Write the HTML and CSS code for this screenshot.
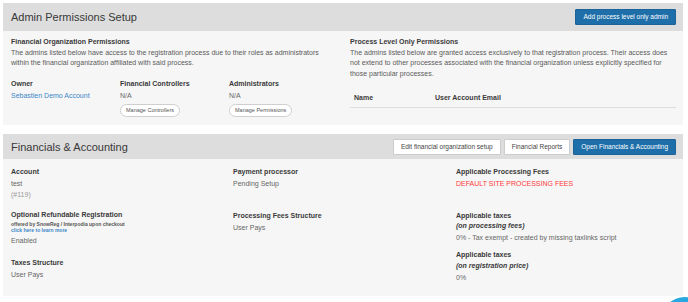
FILE: index.html
```html
<!DOCTYPE html>
<html lang="en">
<head>
<meta charset="utf-8">
<title>Admin Permissions Setup</title>
<link rel="stylesheet" href="styles.css">
</head>
<body>
<section class="panel panel-admin">
  <header class="panel-head head-tall">
    <h2 class="panel-title">Admin Permissions Setup</h2>
    <button class="btn btn-primary">Add process level only admin</button>
  </header>
  <div class="panel-body two-col">
    <div class="col">
      <h3 class="label">Financial Organization Permissions</h3>
      <p class="text">The admins listed below have access to the registration process due to their roles as administrators within the financial organization affiliated with said process.</p>
      <div class="roles">
        <div class="role">
          <div class="label">Owner</div>
          <a class="value link" href="#">Sebastien Demo Account</a>
        </div>
        <div class="role">
          <div class="label">Financial Controllers</div>
          <div class="value">N/A</div>
          <button class="pill">Manage Controllers</button>
        </div>
        <div class="role">
          <div class="label">Administrators</div>
          <div class="value">N/A</div>
          <button class="pill">Manage Permissions</button>
        </div>
      </div>
    </div>
    <div class="col">
      <h3 class="label">Process Level Only Permissions</h3>
      <p class="text">The admins listed below are granted access exclusively to that registration process. Their access does not extend to other processes associated with the financial organization unless explicitly specified for those particular processes.</p>
      <table class="admins">
        <thead>
          <tr><th class="c-name">Name</th><th>User Account Email</th></tr>
        </thead>
      </table>
    </div>
  </div>
</section>

<section class="panel panel-fin">
  <header class="panel-head head-short">
    <h2 class="panel-title">Financials &amp; Accounting</h2>
    <div class="btn-group">
      <button class="btn btn-default">Edit financial organization setup</button>
      <button class="btn btn-default">Financial Reports</button>
      <button class="btn btn-primary">Open Financials &amp; Accounting</button>
    </div>
  </header>
  <div class="panel-body three-col">
    <div class="stack">
      <div class="field">
        <div class="label">Account</div>
        <div class="value">test</div>
        <div class="value muted">(#119)</div>
      </div>
      <div class="field f-gap">
        <div class="label">Optional Refundable Registration</div>
        <div class="tiny">offered by SnowReg / Interpodia upon checkout</div>
        <a class="tiny link" href="#">click here to learn more</a>
        <div class="value">Enabled</div>
      </div>
      <div class="field f-gap2">
        <div class="label">Taxes Structure</div>
        <div class="value">User Pays</div>
      </div>
    </div>
    <div class="stack">
      <div class="field">
        <div class="label">Payment processor</div>
        <div class="value">Pending Setup</div>
      </div>
      <div class="field f-row2">
        <div class="label">Processing Fees Structure</div>
        <div class="value">User Pays</div>
      </div>
    </div>
    <div class="stack">
      <div class="field">
        <div class="label">Applicable Processing Fees</div>
        <div class="value danger">DEFAULT SITE PROCESSING FEES</div>
      </div>
      <div class="field f-row2">
        <div class="label">Applicable taxes</div>
        <div class="note">(on processing fees)</div>
        <div class="value">0% - Tax exempt - created by missing taxlinks script</div>
      </div>
      <div class="field f-tight">
        <div class="label">Applicable taxes</div>
        <div class="note">(on registration price)</div>
        <div class="value">0%</div>
      </div>
    </div>
  </div>
</section>

<div class="chat-bubble" aria-hidden="true"></div>
</body>
</html>
```

FILE: styles.css
```css
* { box-sizing: border-box; }

html, body {
  margin: 0;
  padding: 0;
  background: #ffffff;
}

body {
  padding: 3px 5px 0 3px;
  font-family: "Liberation Sans", Arial, sans-serif;
  color: #555555;
  font-size: 7px;
  line-height: 10.5px;
}

.panel {
  width: 680px;
  background: #f6f6f6;
}

.panel-fin {
  margin-top: 9px;
}

.panel-head {
  display: flex;
  align-items: center;
  justify-content: space-between;
  background: #dddddd;
  padding: 0 7px 0 8px;
}

.head-tall { height: 28px; }
.head-short { height: 25px; }

.panel-title {
  margin: 0;
  font-size: 11px;
  font-weight: normal;
  color: #383838;
  line-height: 14px;
}

.btn {
  height: 16px;
  padding: 0 7px;
  font-family: "Liberation Sans", Arial, sans-serif;
  font-size: 6.5px;
  line-height: 14px;
  border: 1px solid #cccccc;
  border-radius: 1px;
  cursor: pointer;
  white-space: nowrap;
}

.btn-primary {
  background: #1e6fa9;
  border-color: #1b6399;
  color: #ffffff;
}

.btn-default {
  background: #ffffff;
  color: #444444;
}

.btn-group {
  display: flex;
  gap: 3px;
}

.panel-body {
  padding: 6px 7px 8px 8px;
}

.two-col {
  display: grid;
  grid-template-columns: 327px 1fr;
  column-gap: 12px;
}

.three-col {
  display: grid;
  grid-template-columns: 222px 223px 1fr;
  padding-top: 8px;
  padding-bottom: 13px;
}

.label {
  margin: 0;
  font-size: 7px;
  font-weight: bold;
  color: #3a3a3a;
  line-height: 10.5px;
}

.text {
  margin: 0;
  color: #5a5a5a;
}

.roles {
  display: grid;
  grid-template-columns: repeat(3, 109px);
  margin-top: 10px;
}

.role {
  display: flex;
  flex-direction: column;
  align-items: flex-start;
}

.value {
  display: block;
  margin-top: 1.5px;
  color: #666666;
}

.value + .value { margin-top: 0; }

.muted { color: #9a9a9a; }

.link {
  color: #3b86c6;
  text-decoration: none;
}

.danger { color: #ff3a3a; }

.pill {
  margin-top: 3px;
  height: 13px;
  padding: 0 5px;
  border: 1px solid #cfcfcf;
  border-radius: 7px;
  background: #ffffff;
  font-family: "Liberation Sans", Arial, sans-serif;
  font-size: 5.5px;
  line-height: 11px;
  color: #555555;
  cursor: pointer;
}

.admins {
  width: 100%;
  margin-top: 9.5px;
  border-collapse: collapse;
}

.admins th {
  text-align: left;
  font-size: 7px;
  font-weight: bold;
  color: #3a3a3a;
  padding: 4px 4px 3.5px;
  line-height: 10.5px;
  border-bottom: 1px solid #dddddd;
}

.admins .c-name { width: 81px; }

.stack {
  display: flex;
  flex-direction: column;
  align-items: flex-start;
}

.field {
  display: flex;
  flex-direction: column;
  align-items: flex-start;
}

.f-gap { margin-top: 10px; }
.f-gap2 { margin-top: 11px; }
.f-row2 { margin-top: 21px; }
.f-tight { margin-top: 6.5px; }

.tiny {
  font-size: 5px;
  font-weight: bold;
  line-height: 6.5px;
  color: #555555;
}

.tiny.link { color: #3b86c6; }

.tiny + .value { margin-top: 2.5px; }

.note {
  font-size: 7px;
  font-weight: bold;
  font-style: italic;
  line-height: 9px;
  color: #3a3a3a;
}

.note + .value { margin-top: 3px; }

.chat-bubble {
  position: fixed;
  left: 660px;
  top: 297px;
  width: 50px;
  height: 50px;
  border-radius: 50%;
  background: #27a8e0;
}
```
